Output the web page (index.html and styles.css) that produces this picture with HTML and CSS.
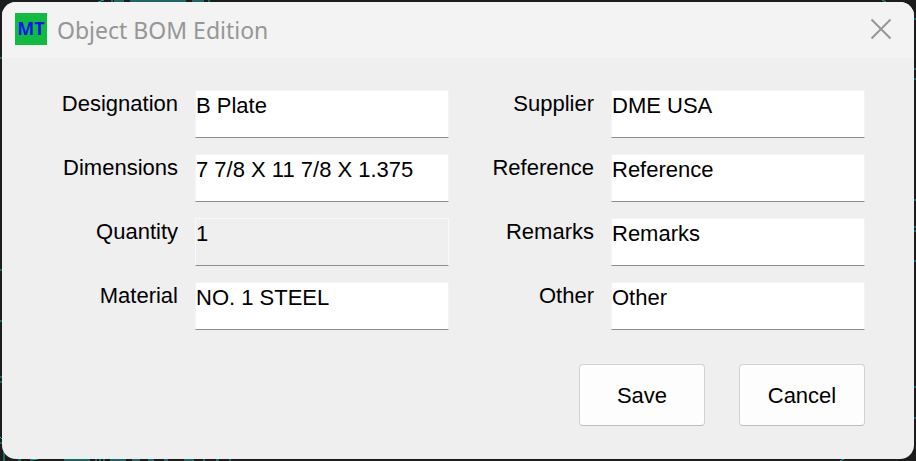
FILE: index.html
```
<!DOCTYPE html>
<html lang="en">
<head>
    <meta charset="UTF-8">
    <meta name="viewport" content="width=device-width, initial-scale=1.0">
    <title>Object BOM Edition</title>
    <link rel="stylesheet" href="styles.css">
</head>
<body>
    <!-- CAD drawing behind the dialog -->
    <svg class="backdrop" viewBox="0 0 916 461" preserveAspectRatio="none" aria-hidden="true">
        <path d="M98 2l6-2M112 0v2M114 1h10M130 1h56M192 1h12M209 0v2M882 0l4 2"/>
        <path d="M0 58h2M0 270h2M0 321h2M0 377h2M0 382h2M0 437l3 3M0 443h3M4 446v15"/>
        <path d="M914 19h2M914 69h2M914 79h2M914 200h2M914 227h2M914 231h2M914 261h2M914 387h2M914 418h2"/>
        <path d="M18 460h3M30 460l8-1M64 460h26M96 459v2M100 459v2M104 459v2M110 460h16M132 460h8M148 460h6M164 460h4M184 460h10M204 459v2M216 460h3M229 460h2M840 461l4-2"/>
    </svg>

    <form class="dialog">
        <div class="title-bar">
            <span class="logo">MT</span>
            <h1 class="title">Object BOM Edition</h1>
            <button type="button" class="close-button" aria-label="Close">
                <svg width="22" height="22" viewBox="0 0 22 22">
                    <path d="M1.5 1.5L20.5 20.5M20.5 1.5L1.5 20.5"/>
                </svg>
            </button>
        </div>

        <div class="fields">
            <label for="designation">Designation</label>
            <input type="text" id="designation" value="B Plate">
            <label for="supplier">Supplier</label>
            <input type="text" id="supplier" value="DME USA">

            <label for="dimensions">Dimensions</label>
            <input type="text" id="dimensions" value="7 7/8 X 11 7/8 X 1.375">
            <label for="reference">Reference</label>
            <input type="text" id="reference" value="Reference">

            <label for="quantity">Quantity</label>
            <input type="text" id="quantity" value="1" readonly>
            <label for="remarks">Remarks</label>
            <input type="text" id="remarks" value="Remarks">

            <label for="material">Material</label>
            <input type="text" id="material" value="NO. 1 STEEL">
            <label for="other">Other</label>
            <input type="text" id="other" value="Other">
        </div>

        <div class="actions">
            <button type="submit" class="action-button">Save</button>
            <button type="button" class="action-button">Cancel</button>
        </div>
    </form>
</body>
</html>
```
FILE: styles.css
```
* {
    box-sizing: border-box;
}

body {
    display: flex;
    min-height: 100vh;
    margin: 0;
    padding: 2px;
    background-color: #1c1c1c;
    font-family: "Liberation Sans", Arial, sans-serif;
    font-size: 22px;
    line-height: 26px;
    color: #000;
}

.backdrop {
    position: absolute;
    top: 0;
    left: 0;
    width: 100%;
    height: 100%;
    fill: none;
    stroke: #22aeb0;
    stroke-width: 1;
}

.dialog {
    position: relative;
    flex: 1;
    border-radius: 14px;
    background-color: #efefef;
    overflow: hidden;
}

.title-bar {
    display: flex;
    align-items: center;
    height: 56px;
    padding: 0 22px 2px 13px;
    background-color: #f3f3f3;
}

.logo {
    width: 32px;
    height: 32px;
    margin-right: 10px;
    background-color: #10bc40;
    color: #1414f0;
    font: bold 18px/30px "Noto Sans", sans-serif;
    text-align: center;
}

.title {
    flex: 1;
    margin: 0;
    padding-top: 2px;
    color: #969696;
    font: 23px/32px "Noto Sans", sans-serif;
}

.close-button {
    display: flex;
    padding: 0;
    border: none;
    background: none;
}

.close-button svg {
    fill: none;
    stroke: #969696;
    stroke-width: 2;
}

.fields {
    display: grid;
    grid-template-columns: 128px 1fr 128px 1fr;
    gap: 16px 17px;
    padding: 32px 49px 0 48px;
}

.fields label {
    padding-top: 1px;
    text-align: right;
}

.fields input {
    width: 100%;
    height: 48px;
    padding: 1px 0 17px;
    border: 1px solid #f4f4f4;
    border-bottom-color: #8c8c8c;
    background-color: #fff;
    color: #000;
    font: inherit;
    outline: none;
}

.fields input:read-only {
    border-color: #f9f9f9;
    border-bottom-color: #8c8c8c;
    background-color: #efefef;
}

.actions {
    display: flex;
    justify-content: flex-end;
    gap: 34px;
    padding: 34px 49px 33px;
}

.action-button {
    width: 126px;
    height: 62px;
    padding: 2px 0 0;
    border: 1px solid #d2d2d2;
    border-bottom-color: #bdbdbd;
    border-radius: 4px;
    background-color: #fdfdfd;
    color: #000;
    font: inherit;
}
```
